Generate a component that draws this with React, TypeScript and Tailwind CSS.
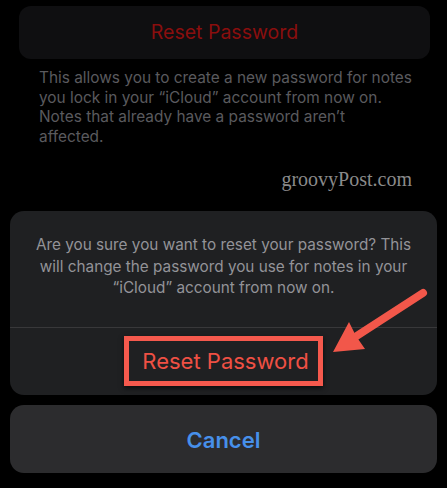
export default function App() {
  return (
    <div className="relative w-[447px] h-[488px] overflow-hidden bg-black font-['Inter','Liberation_Sans',sans-serif]">
      <div className="pt-[6px]">
        <div className="mx-[19px] w-[411px] h-[53px] rounded-[12px] bg-[#0f0f11] flex items-center justify-center">
          <span className="text-[19.5px] text-[#8a0e0e]">Reset Password</span>
        </div>

        <p className="mt-[9px] pl-[39px] pr-[20px] whitespace-nowrap text-[15.4px] leading-[19.5px] text-[#5a5a5e]">
          This allows you to create a new password for notes
          <br />
          you lock in your “iCloud” account from now on.
          <br />
          Notes that already have a password aren’t
          <br />
          affected.
        </p>

        <div className="mt-[21px] pr-[35px] flex justify-end">
          <span className="font-['Liberation_Serif','DejaVu_Serif',serif] text-[20px] leading-[24px] text-[#8a8a8a]">
            groovyPost.com
          </span>
        </div>

        <div className="mt-[20px] mx-[10px] rounded-[14px] bg-[#1f2022]">
          <p className="px-[12px] pt-[23px] pb-[28px] whitespace-nowrap text-center text-[15.3px] leading-[21.5px] text-[#939398]">
            Are you sure you want to reset your password? This
            <br />
            will change the password you use for notes in your
            <br />
            “iCloud” account from now on.
          </p>
          <div className="h-px bg-[#38383a]" />
          <div className="h-[67px] flex items-center justify-center">
            <div className="w-[199px] h-[50px] border-[5px] border-[#f5594d] shadow-[0_2px_5px_rgba(0,0,0,0.7)] flex items-center justify-center">
              <span className="text-[22px] text-[#ef5044] pl-[4px]">Reset Password</span>
            </div>
          </div>
        </div>

        <div className="mt-[10px] mx-[10px] h-[68px] rounded-[14px] bg-[#2c2c2e] flex items-center justify-center pt-[3px]">
          <span className="text-[22px] font-semibold text-[#4790ea]">Cancel</span>
        </div>
      </div>

      <svg className="absolute inset-0 pointer-events-none" width="447" height="488" viewBox="0 0 447 488">
        <line x1="423" y1="293" x2="352" y2="339" stroke="#f2574a" strokeWidth="8" strokeLinecap="round" />
        <polygon points="333,352 349,322 356,336 365,349" fill="#f2574a" />
      </svg>
    </div>
  );
}
